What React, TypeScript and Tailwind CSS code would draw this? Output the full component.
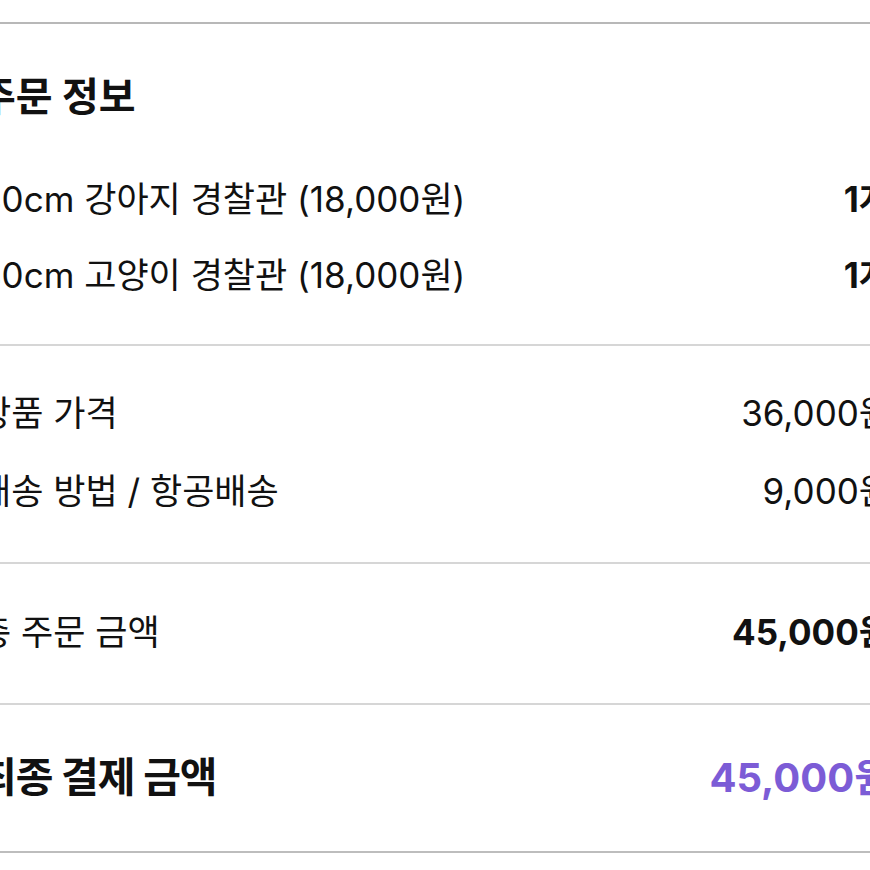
const items = [
  { name: "40cm 강아지 경찰관 (18,000원)", qty: "1개" },
  { name: "40cm 고양이 경찰관 (18,000원)", qty: "1개" },
];

const font = "font-['Inter','Noto_Sans_CJK_KR',sans-serif]";

export default function App() {
  return (
    <div className={`w-[870px] h-[870px] overflow-hidden bg-white text-[#111] ${font}`}>
      <div className="w-[912px] -ml-[21px] pt-[22px]">
        <div className="border-t-2 border-[#b8b8b8]" />

        {/* 주문 정보 */}
        <section className="pt-[53px] pb-[31px]">
          <h2 className="h-[40px] flex items-center text-[40px] font-bold">주문 정보</h2>
          <div className="mt-[44px]">
            {items.map((it) => (
              <div key={it.name} className="h-[76px] flex items-center justify-between text-[35px]">
                <span>{it.name}</span>
                <span className="font-bold">{it.qty}</span>
              </div>
            ))}
          </div>
        </section>
        <div className="border-t-2 border-[#d6d6d6]" />

        {/* 가격 */}
        <section className="pt-[28px] pb-[32px]">
          <div className="h-[78px] flex items-center justify-between text-[35px]">
            <span>상품 가격</span>
            <span>36,000원</span>
          </div>
          <div className="h-[78px] flex items-center justify-between text-[35px]">
            <span>배송 방법 / 항공배송</span>
            <span>9,000원</span>
          </div>
        </section>
        <div className="border-t-2 border-[#d6d6d6]" />

        <section className="pt-[29px] pb-[32px]">
          <div className="h-[78px] flex items-center justify-between text-[35px]">
            <span>총 주문 금액</span>
            <span className="font-bold">45,000원</span>
          </div>
        </section>
        <div className="border-t-2 border-[#d6d6d6]" />

        <section className="pt-[34px] pb-[34px]">
          <div className="h-[78px] flex items-center justify-between">
            <span className="text-[41px] font-bold tracking-tight">최종 결제 금액</span>
            <span className="text-[40px] font-bold text-[#7c5cd6]">45,000원</span>
          </div>
        </section>
        <div className="border-t-2 border-[#bdbdbd]" />
      </div>
    </div>
  );
}
